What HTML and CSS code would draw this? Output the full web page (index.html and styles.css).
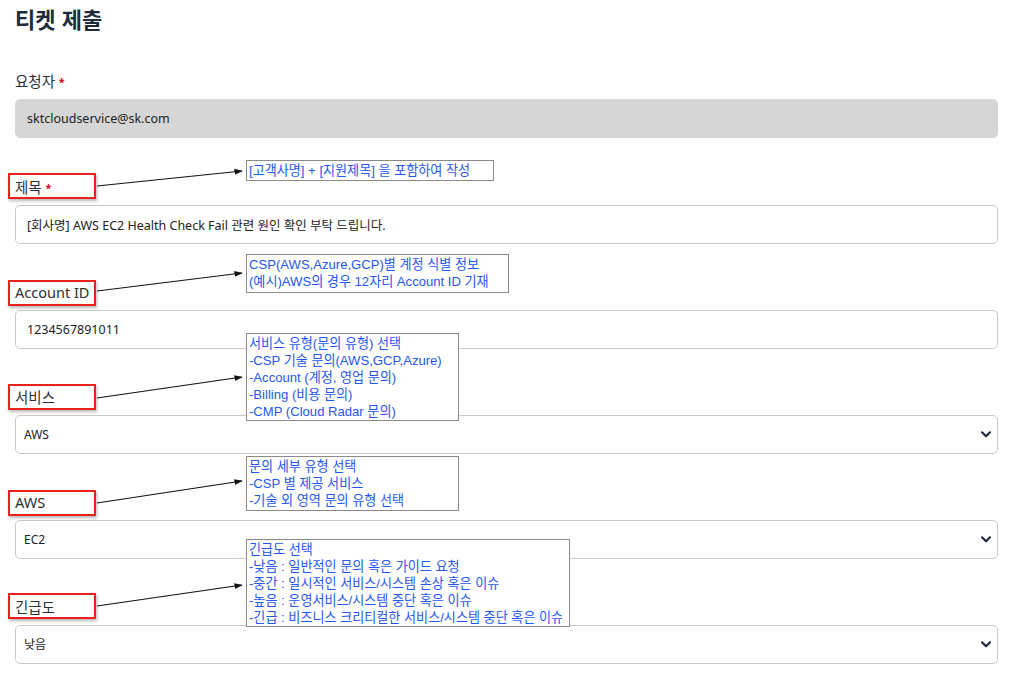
FILE: index.html
```html
<!DOCTYPE html>
<html lang="ko">
<head>
<meta charset="utf-8">
<title>티켓 제출</title>
<link rel="stylesheet" href="styles.css">
</head>
<body>
<main class="page">
  <h1 class="title">티켓 제출</h1>
  <form class="form">
    <div class="field field-first">
      <label class="label">요청자 <span class="req">*</span></label>
      <input class="input input-readonly" type="text" value="sktcloudservice@sk.com" readonly>
    </div>
    <div class="field">
      <label class="label">제목 <span class="req">*</span></label>
      <input class="input" type="text" value="[회사명] AWS EC2 Health Check Fail 관련 원인 확인 부탁 드립니다.">
    </div>
    <div class="field">
      <label class="label">Account ID</label>
      <input class="input" type="text" value="1234567891011">
    </div>
    <div class="field">
      <label class="label">서비스</label>
      <select class="select"><option>AWS</option></select>
    </div>
    <div class="field">
      <label class="label">AWS</label>
      <select class="select"><option>EC2</option></select>
    </div>
    <div class="field">
      <label class="label">긴급도</label>
      <select class="select"><option>낮음</option></select>
    </div>
  </form>
</main>

<div class="overlay">
  <div class="mark mark-1"></div>
  <div class="mark mark-2"></div>
  <div class="mark mark-3"></div>
  <div class="mark mark-4"></div>
  <div class="mark mark-5"></div>

  <div class="note note-1">[고객사명] + [지원제목] 을 포함하여 작성</div>
  <div class="note note-2">CSP(AWS,Azure,GCP)별 계정 식별 정보<br>(예시)AWS의 경우 12자리 Account ID 기재</div>
  <div class="note note-3">서비스 유형(문의 유형) 선택<br>-CSP 기술 문의(AWS,GCP,Azure)<br>-Account (계정, 영업 문의)<br>-Billing (비용 문의)<br>-CMP (Cloud Radar 문의)</div>
  <div class="note note-4">문의 세부 유형 선택<br>-CSP 별 제공 서비스<br>-기술 외 영역 문의 유형 선택</div>
  <div class="note note-5">긴급도 선택<br>-낮음 : 일반적인 문의 혹은 가이드 요청<br>-중간 : 일시적인 서비스/시스템 손상 혹은 이슈<br>-높음 : 운영서비스/시스템 중단 혹은 이슈<br>-긴급 : 비즈니스 크리티컬한 서비스/시스템 중단 혹은 이슈</div>

  <svg class="arrows" width="1015" height="684" viewBox="0 0 1015 684">
    <defs>
      <marker id="head" viewBox="0 0 10 10" refX="9" refY="5" markerWidth="7" markerHeight="7" orient="auto">
        <path d="M0 1.5 L10 5 L0 8.5 Z" fill="#111"/>
      </marker>
    </defs>
    <g stroke="#111" stroke-width="1.2" fill="none" marker-end="url(#head)">
      <line x1="97" y1="186" x2="242" y2="171"/>
      <line x1="97" y1="291" x2="242" y2="273"/>
      <line x1="97" y1="398" x2="242" y2="377"/>
      <line x1="97" y1="503" x2="242" y2="481"/>
      <line x1="97" y1="606" x2="242" y2="585"/>
    </g>
  </svg>
</div>
</body>
</html>
```

FILE: styles.css
```css
* { box-sizing: border-box; }

html, body {
  margin: 0;
  padding: 0;
  background: #ffffff;
}

body {
  font-family: "Noto Sans", "Noto Sans CJK KR", sans-serif;
  color: #2b2f36;
  width: 1015px;
  height: 684px;
  overflow: hidden;
  position: relative;
}

.page {
  padding: 0 17px 0 15px;
}

.title {
  margin: 0 0 35px 0;
  font-size: 22px;
  line-height: 36px;
  font-weight: 700;
  color: #1f2b3a;
  font-family: "Noto Sans CJK KR", "Noto Sans", sans-serif;
}

.form {
  display: flex;
  flex-direction: column;
  gap: 38px;
}

.field {
  display: flex;
  flex-direction: column;
  gap: 8px;
}

.field-first {
  margin-bottom: 1px;
}

.label {
  font-size: 14.5px;
  line-height: 20px;
  height: 20px;
  color: #2b2f36;
  font-family: "Noto Sans", "Noto Sans CJK KR", sans-serif;
}

.req {
  color: #d0021b;
  font-size: 11px;
  font-weight: 700;
  vertical-align: 1px;
}

.input,
.select {
  display: block;
  width: 100%;
  height: 39px;
  margin: 0;
  border: 1px solid #c9c9c9;
  border-radius: 5px;
  background: #ffffff;
  padding: 0 11px;
  font-family: "Noto Sans", "Noto Sans CJK KR", sans-serif;
  font-size: 12.5px;
  color: #222;
  outline: none;
}

.input-readonly {
  background: #d6d6d6;
  border-color: #d6d6d6;
}

.select {
  -webkit-appearance: none;
  appearance: none;
  font-size: 12px;
  padding: 0 30px 0 8px;
  background-image: url("data:image/svg+xml;utf8,<svg xmlns='http://www.w3.org/2000/svg' width='10' height='7' viewBox='0 0 10 7'><path d='M1 1.3 L5 5.3 L9 1.3' fill='none' stroke='%231f2b3a' stroke-width='2.2' stroke-linecap='round' stroke-linejoin='round'/></svg>");
  background-repeat: no-repeat;
  background-position: right 6px center;
  background-size: 10px 7px;
}

/* annotation overlay */
.overlay {
  position: absolute;
  left: 0;
  top: 0;
  width: 1015px;
  height: 684px;
  pointer-events: none;
}

.arrows {
  position: absolute;
  left: 0;
  top: 0;
}

.mark {
  position: absolute;
  left: 8px;
  width: 88px;
  height: 26px;
  border: 2px solid #e8211c;
  box-shadow: 1px 2px 3px rgba(0, 0, 0, 0.28);
}

.mark-1 { top: 173px; }
.mark-2 { top: 280px; }
.mark-3 { top: 384px; }
.mark-4 { top: 490px; }
.mark-5 { top: 593px; }

.note {
  position: absolute;
  left: 246px;
  background: #ffffff;
  border: 1px solid #8a8a8a;
  padding: 1px 2px;
  font-family: "Liberation Sans", "Noto Sans CJK KR", sans-serif;
  font-size: 13.1px;
  line-height: 17px;
  color: #2457ee;
  white-space: nowrap;
}

.note-1 { top: 160px; width: 248px; height: 21px; }
.note-2 { top: 254px; width: 263px; height: 39px; }
.note-3 { top: 333px; width: 213px; height: 88px; }
.note-4 { top: 456px; width: 213px; height: 55px; }
.note-5 { top: 539px; width: 324px; height: 88px; }
```
